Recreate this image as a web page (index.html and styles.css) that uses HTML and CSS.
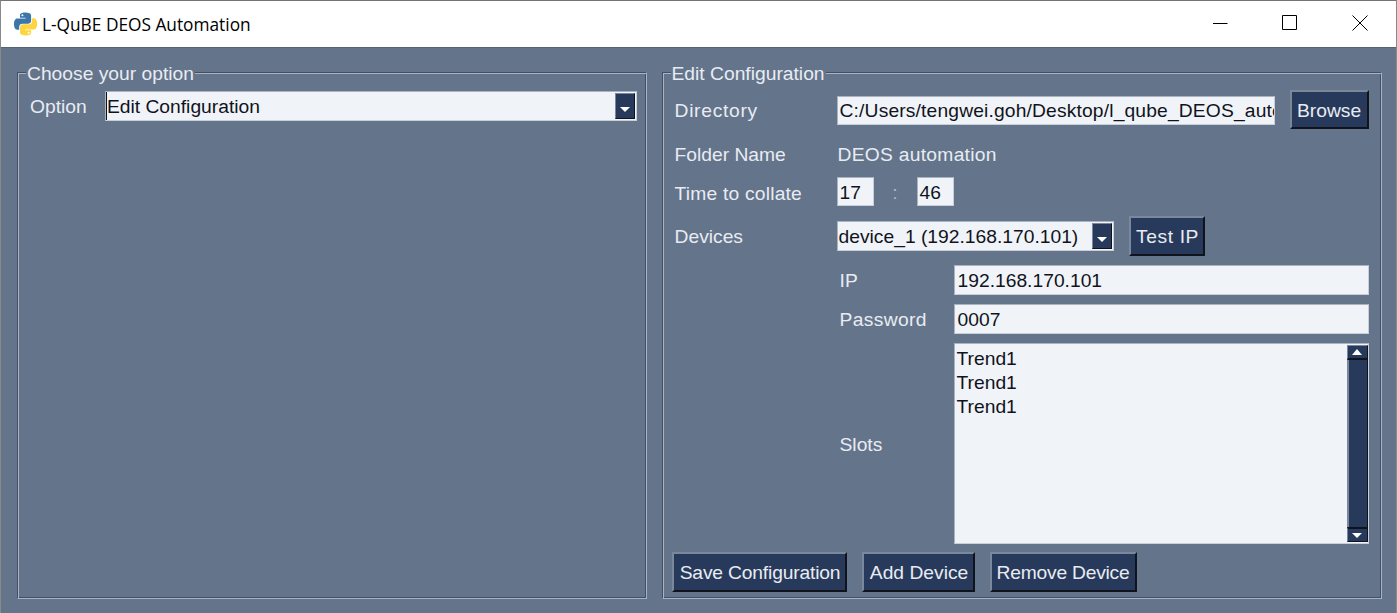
FILE: index.html
```html
<!DOCTYPE html>
<html lang="en">
<head>
<meta charset="utf-8">
<title>L-QuBE DEOS Automation</title>
<link rel="stylesheet" href="styles.css">
</head>
<body>
<div class="window">
  <header class="titlebar">
    <svg class="app-icon" viewBox="0 0 110 110" width="23" height="24" aria-hidden="true">
      <path fill="#3b76a8" d="M54.9 0C26.8 0 28.6 12.2 28.6 12.2v12.6h26.8v3.8H17.9S0 26.6 0 54.8C0 83 15.6 82 15.6 82h9.3V68.9s-.5-15.6 15.4-15.6h26.5s14.9.2 14.9-14.4V14.8S83.9 0 54.9 0zM40.2 8.5a4.8 4.8 0 1 1 0 9.6 4.8 4.8 0 0 1 0-9.6z"/>
      <path fill="#fdd541" transform="rotate(180 55.3 55)" d="M54.9 0C26.8 0 28.6 12.2 28.6 12.2v12.6h26.8v3.8H17.9S0 26.6 0 54.8C0 83 15.6 82 15.6 82h9.3V68.9s-.5-15.6 15.4-15.6h26.5s14.9.2 14.9-14.4V14.8S83.9 0 54.9 0zM40.2 8.5a4.8 4.8 0 1 1 0 9.6 4.8 4.8 0 0 1 0-9.6z"/>
    </svg>
    <span class="title">L-QuBE DEOS Automation</span>
    <div class="controls">
      <span class="control"><svg width="16" height="16" viewBox="0 0 16 16" aria-hidden="true"><path d="M1 8.5h14.5" stroke="#000" fill="none"/></svg></span>
      <span class="control"><svg width="16" height="16" viewBox="0 0 16 16" aria-hidden="true"><path d="M.5.5h14v14H.5z" stroke="#000" fill="none"/></svg></span>
      <span class="control"><svg width="16" height="16" viewBox="0 0 16 16" aria-hidden="true"><path d="M.5.5l15 15M15.5.5l-15 15" stroke="#000" fill="none"/></svg></span>
    </div>
  </header>
  <main class="content">
    <fieldset class="panel panel-left">
      <legend>Choose your option</legend>
      <div class="option-row">
        <span class="label option-label">Option</span>
        <div class="combo combo-wide">
          <div class="combo-text"><span class="caret">Edit Configuration</span></div>
          <span class="combo-arrow"><i class="arrow-down"></i></span>
        </div>
      </div>
    </fieldset>
    <fieldset class="panel panel-right">
      <legend>Edit Configuration</legend>
      <div class="row row-dir">
        <span class="label col-label lbl-dir">Directory</span>
        <div class="field field-dir"><span class="path-text">C:/Users/tengwei.goh/Desktop/l_qube_DEOS_automation</span></div>
        <button class="btn btn-browse" type="button">Browse</button>
      </div>
      <div class="row row-folder">
        <span class="label col-label">Folder Name</span>
        <span class="label folder-value">DEOS automation</span>
      </div>
      <div class="row row-time">
        <span class="label col-label lbl-time">Time to collate</span>
        <div class="field field-time">17</div>
        <span class="label colon">:</span>
        <div class="field field-time">46</div>
      </div>
      <div class="row row-dev">
        <span class="label col-label">Devices</span>
        <div class="combo combo-dev">
          <div class="combo-text">device_1 (192.168.170.101)</div>
          <span class="combo-arrow"><i class="arrow-down"></i></span>
        </div>
        <button class="btn btn-test" type="button">Test IP</button>
      </div>
      <div class="sub">
        <div class="sub-row">
          <span class="label sub-label">IP</span>
          <div class="field field-sub">192.168.170.101</div>
        </div>
        <div class="sub-row">
          <span class="label sub-label lbl-pass">Password</span>
          <div class="field field-sub">0007</div>
        </div>
        <div class="sub-row sub-slots">
          <span class="label sub-label">Slots</span>
          <div class="listbox">
            <div class="list-items">
              <div>Trend1</div>
              <div>Trend1</div>
              <div>Trend1</div>
            </div>
            <div class="scrollbar">
              <span class="scroll-btn scroll-up"><i class="arrow-up"></i></span>
              <span class="scroll-track"></span>
              <span class="scroll-btn scroll-down"><i class="arrow-down"></i></span>
            </div>
          </div>
        </div>
      </div>
      <div class="actions">
        <button class="btn btn-save" type="button">Save Configuration</button>
        <button class="btn btn-add" type="button">Add Device</button>
        <button class="btn btn-remove" type="button">Remove Device</button>
      </div>
    </fieldset>
  </main>
</div>
</body>
</html>
```
FILE: styles.css
```css
* { box-sizing: border-box; }
html, body { margin: 0; padding: 0; height: 100%; overflow: hidden; }
body { font-family: "Liberation Sans", Arial, sans-serif; font-size: 19.25px; line-height: 22px; }

.window {
  width: 1397px; height: 613px;
  display: flex; flex-direction: column;
  border-top: 1px solid #747474; border-left: 1px solid #8a8a8a; border-right: 1px solid #8a8a8a;
  background: #64748b;
}

.titlebar {
  height: 47px; flex: none;
  display: flex; align-items: center;
  background: #fff;
  padding-left: 13px;
  border-bottom: 1px solid #566377;
}
.app-icon { flex: none; margin-right: 5px; margin-top: -1px; }
.title { font-family: "Open Sans", "Noto Sans", sans-serif; font-size: 17.3px; color: #000; padding-top: 1px; }
.controls { margin-left: auto; display: flex; margin-right: 1px; align-self: flex-start; }
.control { width: 70px; height: 45px; display: flex; align-items: center; justify-content: center; }
.control svg { display: block; margin-top: -1px; }

.content {
  flex: 1; min-height: 0;
  display: flex; gap: 15px;
  padding: 13px 14px 14px 16px;
}

.panel {
  margin: 0; min-width: 0;
  border: 1px solid;
  border-color: #434f65 #a9b3c2 #a9b3c2 #434f65;
  box-shadow: inset 1px 1px 0 #a9b3c2, inset -1px -1px 0 #434f65;
  display: flex; flex-direction: column;
  color: #e8ecf2;
}
.panel legend { padding: 2px 1px 0; height: 22px; line-height: 22px; background: #64748b; }
.panel-left { width: 630px; padding: 7px 9px 0 12px; }
.panel-left legend { margin-left: -4px; }
.panel-right { width: 721px; padding: 7px 9px 5px 9px; }
.panel-right legend { margin-left: -1px; }

.label { color: #e8ecf2; white-space: nowrap; padding-top: 2px; }

.option-row { display: flex; align-items: center; height: 31px; }
.option-label { width: 75px; }

.field, .combo, .listbox {
  background: #f0f4f8; color: #10131c;
  border: 1px solid #c9cfd9; border-top-color: #aab3c1; border-left-color: #aab3c1;
}
.field { padding: 2px 2px 0; white-space: nowrap; overflow: hidden; display: flex; align-items: center; }
.path-text { letter-spacing: 0.15px; }

.combo { display: flex; align-items: stretch; }
.combo-text { flex: 1; min-width: 0; padding: 2px 1px 0; display: flex; align-items: center; white-space: nowrap; overflow: hidden; }
.combo-wide .combo-text { padding: 0; }
.caret { display: flex; align-items: center; align-self: stretch; padding-top: 2px; border-left: 1px solid #10131c; }
.combo-arrow {
  flex: none; width: 20px; display: flex; align-items: flex-end; justify-content: center;
  padding-bottom: 6px; margin: 1px;
  background: #283a5b;
  border-left: 1px solid #7b879b; border-top: 1px solid #7b879b; border-right: 1px solid #10131c; border-bottom: 1px solid #10131c;
}
.combo-wide { width: 532px; height: 30px; }
.combo-dev { width: 277px; height: 30px; }

.arrow-down, .arrow-up { display: block; width: 0; height: 0; border-left: 5.5px solid transparent; border-right: 5.5px solid transparent; }
.arrow-down { border-top: 5px solid #fff; }
.arrow-up { border-bottom: 6px solid #fff; }

.btn {
  font: inherit; color: #e8ecf2; margin: 0; padding: 2px 0 0; white-space: nowrap;
  background: #283a5b;
  border-style: solid; border-width: 2px;
  border-color: #7b879b #10131c #10131c #7b879b;
  height: 40px;
}

.row { display: flex; align-items: center; flex: none; }
.col-label { width: 165px; padding-left: 3px; flex: none; }
.lbl-dir { letter-spacing: 0.7px; }
.lbl-time { letter-spacing: 0.2px; padding-top: 4px; }
.lbl-pass { letter-spacing: 0.35px; }
.folder-value { letter-spacing: 0.27px; margin-left: 1px; }

.row-dir { height: 39px; }
.field-dir { width: 438px; height: 29px; margin-top: 1px; }
.btn-browse { width: 79px; height: 39px; margin-left: 15px; }

.row-folder { height: 24px; margin-top: 13px; }

.row-time { height: 29px; margin-top: 11px; }
.field-time { width: 37px; height: 29px; }
.colon { width: 43px; text-align: center; color: #aeb8c6; }

.row-dev { height: 40px; margin-top: 10px; }
.btn-test { width: 76px; margin-left: 15px; letter-spacing: 0.6px; padding-left: 2px; }

.sub { display: flex; flex-direction: column; gap: 9px; margin-top: 9px; padding-left: 168px; }
.sub-row { display: flex; align-items: center; height: 30px; }
.sub-label { width: 114px; flex: none; }
.field-sub { width: 415px; height: 30px; padding-left: 3px; }
.sub-slots { height: 201px; }

.listbox { width: 415px; height: 201px; display: flex; }
.list-items { flex: 1; padding: 3px 2px 0; line-height: 24px; }

.scrollbar { flex: none; width: 21px; margin: 1px 0; display: flex; flex-direction: column; }
.scroll-btn {
  flex: none; height: 15px; background: #283a5b;
  display: flex; align-items: center; justify-content: center;
  border-style: solid; border-width: 1px;
  border-color: #7b879b #10131c #10131c #7b879b;
}
.scroll-up { border-bottom-width: 2px; }
.scroll-down { border-top: 2px solid #10131c; }
.scroll-track { flex: 1; background: #283a5b; border-left: 2px solid #7b879b; border-right: 1px solid #10131c; }

.actions { display: flex; gap: 15px; margin-top: 8px; }
.btn-save { width: 175px; letter-spacing: -0.17px; padding-left: 2px; }
.btn-add { width: 113px; padding-left: 2px; }
.btn-remove { width: 147px; letter-spacing: -0.23px; }
```
